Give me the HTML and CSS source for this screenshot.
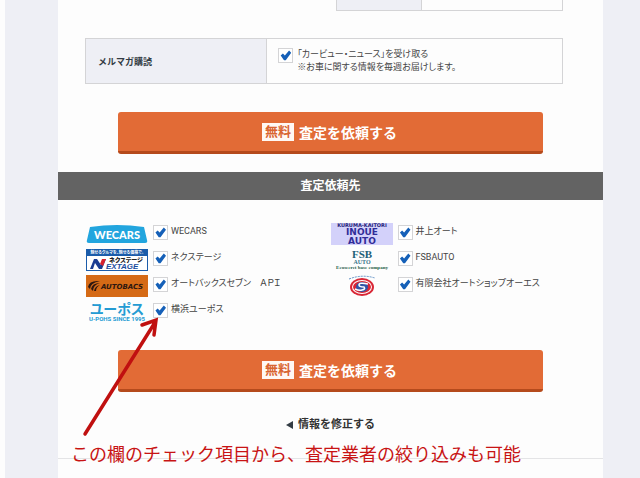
FILE: index.html
```html
<!DOCTYPE html>
<html lang="ja">
<head>
    <meta charset="UTF-8">
    <meta name="viewport" content="width=device-width, initial-scale=1.0">
    <title>査定依頼</title>
    <link rel="stylesheet" href="styles.css">
</head>

<body>
    <div class="page">
        <form class="form-area">
            <div class="prev-table">
                <div class="prev-head"></div>
                <div class="prev-data"></div>
            </div>

            <table class="form-table">
                <tr>
                    <th scope="row">メルマガ購読</th>
                    <td>
                        <div class="news">
                            <input type="checkbox" class="check" id="news" checked>
                            <label for="news">「カービュー・ニュース」を受け取る<br>※お車に関する情報を毎週お届けします。</label>
                        </div>
                    </td>
                </tr>
            </table>

            <button type="button" class="submit"><span class="free">無料</span>査定を依頼する</button>

            <h2 class="bar">査定依頼先</h2>

            <div class="shops">
                <div class="shop-column">
                    <div class="shop">
                        <svg class="logo" viewBox="0 0 62 22">
                            <path d="M4 4Q31 0 58 4L61 17Q62 20 59 20H3Q0 20 1 17Z" fill="#22a5de"/>
                            <text x="31" y="16" text-anchor="middle" font-family="Lato" font-weight="900" font-size="11" fill="#fff">WECARS</text>
                        </svg>
                        <input type="checkbox" class="check" id="wecars" checked>
                        <label for="wecars">WECARS</label>
                    </div>
                    <div class="shop">
                        <svg class="logo" viewBox="0 0 62 22">
                            <rect x="0.5" y="0.5" width="61" height="21" fill="#fff" stroke="#1b5caa"/>
                            <rect width="62" height="7" fill="#1b5caa"/>
                            <text x="31" y="5" text-anchor="middle" font-family="Noto Sans CJK JP" font-weight="700" font-size="4" fill="#fff">魅せるクルマを、魅せる価格で。</text>
                            <path d="M4 20L8 10H11L15 16L17 10H20L16 20H13L9 14L7 20Z" fill="#1a3c92"/>
                            <path d="M14 15L16 10H20L17 17Z" fill="#d8202c"/>
                            <text x="23" y="13" font-family="Noto Sans CJK JP" font-weight="900" font-size="6" fill="#222">ネクステージ</text>
                            <text x="20" y="20" font-family="Liberation Sans" font-weight="700" font-style="italic" font-size="8" fill="#1a4c9c">EXTAGE</text>
                        </svg>
                        <input type="checkbox" class="check" id="nextage" checked>
                        <label for="nextage">ネクステージ</label>
                    </div>
                    <div class="shop">
                        <svg class="logo" viewBox="0 0 62 22">
                            <rect width="62" height="22" fill="#d56a16"/>
                            <path d="M14 6Q3 5 2 12L4 14Q4 8 14 6ZM14 8Q6 8 5 14L7 16Q7 10 14 8ZM14 10Q9 11 8 16L10 16Q10 12 14 10Z" fill="#2d1710"/>
                            <text x="15" y="14" font-family="DejaVu Sans" font-weight="700" font-style="italic" font-size="7" fill="#2d1710">AUTOBACS</text>
                        </svg>
                        <input type="checkbox" class="check" id="autobacs" checked>
                        <label for="autobacs">オートバックスセブン　ＡＰＩ</label>
                    </div>
                    <div class="shop">
                        <svg class="logo" viewBox="0 0 62 22">
                            <text x="31" y="13" text-anchor="middle" font-family="Noto Sans CJK JP" font-weight="700" font-size="14" fill="#249bd3">ユーポス</text>
                            <text x="31" y="20" text-anchor="middle" font-family="Roboto" font-weight="700" font-size="6" fill="#249bd3">U-POHS SINCE 1995</text>
                        </svg>
                        <input type="checkbox" class="check" id="upohs" checked>
                        <label for="upohs">横浜ユーポス</label>
                    </div>
                </div>

                <div class="shop-column">
                    <div class="shop">
                        <svg class="logo" viewBox="0 0 62 22">
                            <rect width="62" height="22" fill="#d3d1fa"/>
                            <text x="31" y="4" text-anchor="middle" font-family="DejaVu Sans" font-weight="700" font-size="5" fill="#242178">KURUMA-KAITORI</text>
                            <text x="31" y="12" text-anchor="middle" font-family="DejaVu Sans" font-weight="700" font-size="9" fill="#302c98">INOUE</text>
                            <text x="31" y="21" text-anchor="middle" font-family="DejaVu Sans" font-weight="700" font-size="9" fill="#302c98">AUTO</text>
                        </svg>
                        <input type="checkbox" class="check" id="inoue" checked>
                        <label for="inoue">井上オート</label>
                    </div>
                    <div class="shop">
                        <svg class="logo" viewBox="0 0 62 22">
                            <text x="31" y="9" text-anchor="middle" font-family="Liberation Serif" font-weight="700" font-size="11" fill="#1d6078">FSB</text>
                            <text x="31" y="15" text-anchor="middle" font-family="Liberation Serif" font-weight="700" font-size="6" fill="#35748a">AUTO</text>
                            <text x="31" y="20" text-anchor="middle" font-family="Liberation Serif" font-weight="700" font-size="5" fill="#1d6048">Ecosecret base company</text>
                        </svg>
                        <input type="checkbox" class="check" id="fsb" checked>
                        <label for="fsb">FSBAUTO</label>
                    </div>
                    <div class="shop">
                        <svg class="logo" viewBox="0 0 62 22">
                            <path d="M18 4Q31 -1 44 3" fill="none" stroke="#5d8fc4" stroke-width="1" stroke-dasharray="2 1"/>
                            <ellipse cx="31" cy="12" rx="12" ry="9" fill="#d92736"/>
                            <ellipse cx="31" cy="12" rx="10" ry="7" fill="#fff"/>
                            <ellipse cx="31" cy="12" rx="9" ry="6" fill="#d92736"/>
                            <ellipse cx="31" cy="12" rx="6" ry="5" fill="#3156a8"/>
                            <path d="M37 9Q28 7 28 10Q28 12 33 12Q35 14 31 15Q28 16 24 14" fill="none" stroke="#fff" stroke-width="1.5"/>
                        </svg>
                        <input type="checkbox" class="check" id="os" checked>
                        <label for="os">有限会社オートショップオーエス</label>
                    </div>
                </div>
            </div>

            <button type="button" class="submit"><span class="free">無料</span>査定を依頼する</button>

            <a href="#" class="back">
                <svg class="back-icon" viewBox="0 0 7 8"><path d="M7 0V8L0 4Z" fill="#333c44"/></svg>
                情報を修正する
            </a>
        </form>
        <footer class="footer"></footer>

        <!-- note on top of the form -->
        <svg class="arrow" viewBox="0 0 84 120">
            <path d="M13 117L82 7M70 8L84 3L82 18" fill="none" stroke="#c01010" stroke-width="3.5" stroke-linecap="round"/>
        </svg>
        <p class="note">この欄のチェック項目から、査定業者の絞り込みも可能</p>
    </div>
</body>
</html>
```
FILE: styles.css
```css
* {
    box-sizing: border-box;
}

body {
    margin: 0;
    padding-left: 5px;
    background-color: #fdfdfd;
    color: #444;
    font-family: Roboto, "Noto Sans CJK JP", sans-serif;
    font-size: 9px;
}

.page {
    position: relative;
    display: flex;
    flex-direction: column;
    min-height: 100vh;
    padding: 0 37px 0 53px;
    background-color: #eeeff5;
}

.form-area {
    display: flex;
    flex-direction: column;
    background-color: #fdfdfd;
}

.prev-table {
    display: flex;
    align-self: flex-end;
    width: calc(50% - 45px);
    height: 11px;
    margin-right: 40px;
    border: 1px solid #d4d4d6;
    border-top: none;
}

.prev-head {
    width: 38%;
    background-color: #eeeff5;
    border-right: 1px solid #d4d4d6;
}

.form-table {
    margin: 27px 40px 0 27px;
    border-collapse: collapse;
    table-layout: fixed;
}

.form-table th,
.form-table td {
    height: 45px;
    padding: 0 12px;
    border: 1px solid #d4d4d6;
    text-align: left;
}

.form-table th {
    width: 38%;
    background-color: #eeeff5;
    color: #333c44;
}

.form-table td {
    padding: 0 11px;
}

.news {
    display: flex;
    gap: 4px;
    line-height: 13px;
    font-feature-settings: "palt";
}

.check {
    appearance: none;
    flex: none;
    width: 15px;
    height: 15px;
    margin: 0;
    padding: 1px;
    background-color: #fff;
    border: 1px solid #d4d4d6;
}

.check:checked::before {
    content: "";
    display: block;
    height: 11px;
    background-color: #1560b8;
    clip-path: polygon(4% 50%, 24% 32%, 42% 50%, 80% 4%, 100% 24%, 50% 94%, 34% 94%);
}

.submit {
    align-self: center;
    display: flex;
    justify-content: center;
    align-items: center;
    gap: 5px;
    width: 78%;
    height: 42px;
    margin-top: 28px;
    padding: 0 2px 0 0;
    background-color: #e26b36;
    border: none;
    border-bottom: 3px solid #b54a1c;
    border-radius: 3px;
    color: #fff;
    font-family: inherit;
    font-size: 14px;
    font-weight: 700;
}

.free {
    padding: 0 3px;
    background-color: #fff8f4;
    color: #d96531;
    font-size: 13px;
    line-height: 18px;
}

.bar {
    margin: 18px 0 0;
    background-color: #636363;
    color: #fff;
    font-size: 12px;
    line-height: 28px;
    text-align: center;
}

.shops {
    display: grid;
    grid-template-columns: 1fr 1fr;
    padding: 23px 28px 0;
}

.shop {
    display: flex;
    gap: 3px;
    height: 26px;
    line-height: 16px;
    font-feature-settings: "palt";
}

.shop .check {
    margin-top: 2px;
}

.logo {
    flex: none;
    width: 62px;
    height: 22px;
    margin-right: 2px;
    overflow: visible;
}

.shops + .submit {
    margin-top: 23px;
}

.back {
    align-self: center;
    display: flex;
    align-items: center;
    gap: 5px;
    margin: 23px 0;
    color: #333;
    font-size: 11px;
    font-weight: 700;
    line-height: 20px;
    text-decoration: none;
}

.back-icon {
    width: 7px;
    height: 8px;
}

.footer {
    flex: 1;
    background-color: #fdfdfd;
    border-top: 1px solid #e4e4e6;
}

.arrow {
    position: absolute;
    left: 67px;
    top: 317px;
    width: 84px;
    height: 120px;
    overflow: visible;
}

.note {
    position: absolute;
    left: 66px;
    top: 442px;
    margin: 0;
    color: #c81414;
    font-size: 18px;
    line-height: 26px;
    white-space: nowrap;
}
```
